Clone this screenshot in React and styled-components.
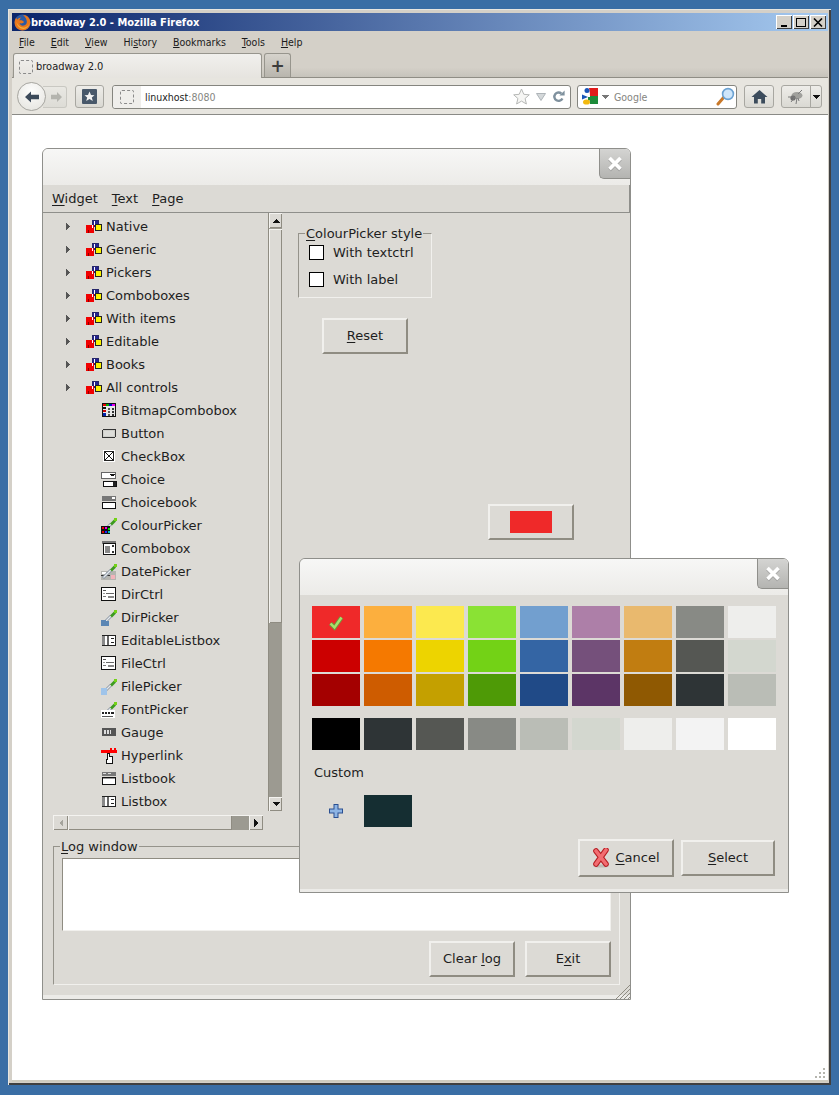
import React from "react";
import styled, { createGlobalStyle } from "styled-components";

const GlobalStyle = createGlobalStyle`
  html, body {
    margin: 0;
    width: 839px;
    height: 1095px;
    overflow: hidden;
    background: #3a6ea5;
  }
  * { box-sizing: border-box; }
  u { text-decoration-skip-ink: none; }
`;

const TOP_ITEMS = ["Native", "Generic", "Pickers", "Comboboxes", "With items", "Editable", "Books", "All controls"];

const CONTROLS = [
  ["BitmapCombobox", "bitmap"],
  ["Button", "button"],
  ["CheckBox", "check"],
  ["Choice", "choice"],
  ["Choicebook", "choicebook"],
  ["ColourPicker", "colour"],
  ["Combobox", "combo"],
  ["DatePicker", "date"],
  ["DirCtrl", "ctrl"],
  ["DirPicker", "dir"],
  ["EditableListbox", "list"],
  ["FileCtrl", "ctrl"],
  ["FilePicker", "file"],
  ["FontPicker", "font"],
  ["Gauge", "gauge"],
  ["Hyperlink", "link"],
  ["Listbook", "listbook"],
  ["Listbox", "list"],
];

const PALETTE = [
  "#ef2929", "#fcaf3e", "#fce94f", "#8ae234", "#729fcf", "#ad7fa8", "#e9b96e", "#888a85", "#eeeeec",
  "#cc0000", "#f57900", "#edd400", "#73d216", "#3465a4", "#75507b", "#c17d11", "#555753", "#d3d7cf",
  "#a40000", "#ce5c00", "#c4a000", "#4e9a06", "#204a87", "#5c3566", "#8f5902", "#2e3436", "#babdb6",
];

const GREYS = ["#000000", "#2e3436", "#555753", "#888a85", "#babdb6", "#d3d7cf", "#eeeeec", "#f3f3f3", "#ffffff"];

/* drawings */

const Pixel = styled.svg`
  display: block;
  flex: none;
  shape-rendering: crispEdges;
`;

const Smooth = styled.svg`
  display: block;
  flex: none;
`;

const Dropper = () => (
  <g shapeRendering="auto">
    <path d="M2 14 L10 6" stroke="#8b97a3" strokeWidth="3" />
    <path d="M2.5 13.5 L10 6" stroke="#e4e8ec" strokeWidth="1.2" />
    <path d="M9 5.5 L13 1.5 L15 3.5 L11 7.5 Z" fill="#3d9a20" />
    <path d="M13 0 h3 v3 h-3 Z" fill="#73d216" />
  </g>
);

const ControlIcon = ({ kind }) => {
  const k = "#111";
  let art = null;
  if (kind === "bitmap") {
    art = (
      <g>
        <rect x="1.5" y="0.5" width="13" height="13" fill="#e8e8e8" stroke={k} />
        <rect x="2" y="1" width="3" height="2" fill="#e00" />
        <rect x="5" y="1" width="3" height="2" fill="#0a0" />
        <rect x="8" y="1" width="3" height="2" fill="#00c" />
        <rect x="11" y="1" width="3" height="2" fill="#e0e" />
        <rect x="2" y="4" width="3" height="2" fill="#111" />
        <rect x="2" y="7" width="3" height="2" fill="#c00" />
        <rect x="2" y="10" width="3" height="3" fill="#02a" />
        <rect x="7" y="5" width="2" height="2" fill="#555" />
        <rect x="11" y="5" width="2" height="2" fill="#333" />
        <rect x="7" y="8" width="2" height="2" fill="#555" />
        <rect x="11" y="8" width="2" height="2" fill="#333" />
        <rect x="7" y="11" width="2" height="2" fill="#555" />
        <rect x="11" y="11" width="2" height="2" fill="#333" />
      </g>
    );
  } else if (kind === "button") {
    art = (
      <g>
        <rect x="1.5" y="3.5" width="13" height="8" rx="1.5" fill="#cfcfca" stroke="#333" />
        <rect x="3" y="5" width="10" height="5" fill="#dcdcd8" />
      </g>
    );
  } else if (kind === "check") {
    art = (
      <g>
        <rect x="2" y="1" width="12" height="12" fill="#fff" />
        <path d="M4 3 L12 11 M12 3 L4 11" stroke="#111" shapeRendering="auto" />
        <rect x="3.5" y="2.5" width="9" height="9" fill="none" stroke="#222" />
      </g>
    );
  } else if (kind === "choice") {
    art = (
      <g>
        <rect x="0.5" y="0.5" width="14" height="6" fill="#fff" stroke="#666" />
        <path d="M9 2 h5 v1 h-1 v1 h-3 v-1 h-1 Z" fill="#111" />
        <rect x="2.5" y="9.5" width="13" height="5" fill="#fff" stroke="#111" />
        <rect x="12" y="10" width="3" height="4" fill="#222" />
      </g>
    );
  } else if (kind === "choicebook") {
    art = (
      <g>
        <rect x="1" y="1" width="14" height="5" fill="#777" />
        <rect x="11" y="2" width="3" height="2" fill="#fff" />
        <rect x="1.5" y="7.5" width="13" height="6" fill="#fff" stroke="#111" />
      </g>
    );
  } else if (kind === "colour") {
    art = (
      <g>
        <Dropper />
        <rect x="0" y="8" width="9" height="8" fill="#111" />
        <rect x="1" y="9" width="2" height="2" fill="#e00" />
        <rect x="4" y="9" width="2" height="2" fill="#e0e" />
        <rect x="7" y="10" width="2" height="2" fill="#0d0" />
        <rect x="1" y="13" width="2" height="2" fill="#d00" />
        <rect x="4" y="13" width="2" height="2" fill="#22f" />
        <rect x="7" y="13" width="2" height="2" fill="#0bb" />
      </g>
    );
  } else if (kind === "combo") {
    art = (
      <g>
        <rect x="1" y="0" width="14" height="3" fill="#777" />
        <rect x="2.5" y="2.5" width="12" height="11" fill="#fff" stroke="#111" />
        <rect x="4" y="5" width="5" height="7" fill="#888" />
        <rect x="11" y="4" width="2" height="2" fill="#333" />
        <rect x="11" y="10" width="2" height="2" fill="#333" />
      </g>
    );
  } else if (kind === "date") {
    art = (
      <g>
        <rect x="0" y="7" width="15" height="9" fill="#b5b5b0" />
        <rect x="1" y="8" width="4" height="2" fill="#fff" />
        <rect x="10" y="11" width="4" height="4" fill="#f3b3bb" />
        <rect x="0" y="11" width="9" height="1" fill="#333" />
        <Dropper />
      </g>
    );
  } else if (kind === "ctrl") {
    art = (
      <g>
        <rect x="0.5" y="0.5" width="14" height="13" fill="#fff" stroke="#111" />
        <rect x="2" y="3" width="3" height="1" fill="#555" />
        <rect x="5" y="6" width="8" height="1" fill="#666" />
        <rect x="2" y="6" width="2" height="1" fill="#999" />
        <rect x="7" y="9" width="6" height="2" fill="#888" />
        <rect x="2" y="9" width="3" height="1" fill="#777" />
      </g>
    );
  } else if (kind === "dir") {
    art = (
      <g>
        <Dropper />
        <path d="M0 10 h4 l1 1 h3 v5 h-8 Z" fill="#5b86b4" />
      </g>
    );
  } else if (kind === "file") {
    art = (
      <g>
        <Dropper />
        <rect x="0" y="9" width="6" height="7" fill="#9fc4ea" />
      </g>
    );
  } else if (kind === "font") {
    art = (
      <g>
        <Dropper />
        <rect x="0" y="8" width="14" height="8" fill="#fff" />
        <rect x="1" y="10" width="2" height="2" fill="#222" />
        <rect x="4" y="10" width="2" height="2" fill="#222" />
        <rect x="7" y="10" width="2" height="2" fill="#222" />
        <rect x="10" y="10" width="3" height="2" fill="#222" />
        <rect x="1" y="14" width="11" height="1" fill="#555" />
      </g>
    );
  } else if (kind === "list") {
    art = (
      <g>
        <rect x="1.5" y="2.5" width="13" height="10" fill="#fff" stroke="#222" />
        <rect x="1" y="3" width="3" height="9" fill="#888" />
        <rect x="6" y="3" width="2" height="9" fill="#666" />
        <rect x="10" y="5" width="3" height="1" fill="#222" />
        <rect x="10" y="9" width="3" height="1" fill="#222" />
      </g>
    );
  } else if (kind === "gauge") {
    art = (
      <g>
        <rect x="1" y="3" width="14" height="8" fill="#555" />
        <rect x="3" y="5" width="2" height="4" fill="#ddd" />
        <rect x="6" y="5" width="2" height="4" fill="#ddd" />
        <rect x="9" y="5" width="1" height="4" fill="#ddd" />
      </g>
    );
  } else if (kind === "link") {
    art = (
      <g>
        <rect x="0" y="2" width="16" height="3" fill="#f00" />
        <rect x="9" y="0" width="2" height="2" fill="#f00" />
        <rect x="13" y="0" width="2" height="2" fill="#f00" />
        <path d="M6 5 h2 v3 h3 v7 h-6 v-4 h1 Z" fill="#fff" stroke="#111" />
      </g>
    );
  } else if (kind === "listbook") {
    art = (
      <g>
        <rect x="1" y="1" width="14" height="4" fill="#777" />
        <rect x="2" y="2" width="3" height="1" fill="#ddd" />
        <rect x="7" y="2" width="3" height="1" fill="#ddd" />
        <rect x="1.5" y="6.5" width="13" height="7" fill="#fff" stroke="#111" />
        <rect x="2" y="7" width="12" height="1" fill="#999" />
      </g>
    );
  }
  return (
    <Pixel width="16" height="16" viewBox="0 0 16 16">
      {art}
    </Pixel>
  );
};

const BookIcon = () => (
  <Pixel width="16" height="16" viewBox="0 0 16 16">
    <rect x="6.5" y="1.5" width="6" height="6" fill="#24248f" stroke="#26266a" />
    <rect x="8" y="2" width="1" height="4" fill="#fff" />
    <rect x="0" y="6" width="8" height="8" fill="#f00000" />
    <rect x="6" y="6" width="1" height="3" fill="#fff" />
    <rect x="2" y="11" width="1" height="3" fill="#8a0000" />
    <rect x="9.5" y="5.5" width="6" height="6" fill="#fbf300" stroke="#222" />
  </Pixel>
);

const Expander = () => (
  <Pixel width="5" height="7" viewBox="0 0 5 7">
    <path d="M0 0 L4 3.5 L0 7 Z" fill="#555" />
  </Pixel>
);

const CloseGlyph = () => (
  <Smooth width="18" height="18" viewBox="0 0 18 18">
    <path d="M3.5 4 L14.5 15 M14.5 4 L3.5 15" stroke="#8d8d8d" strokeWidth="4" opacity="0.5" />
    <path d="M3.5 3 L14.5 14 M14.5 3 L3.5 14" stroke="#fff" strokeWidth="3.6" />
  </Smooth>
);

const Firefox = () => (
  <Smooth width="17" height="17" viewBox="0 0 17 17">
    <circle cx="8.5" cy="8.5" r="8" fill="#2a5aa6" />
    <path d="M9 1 C13 1 16.6 4.5 16.4 9 C16 13.5 12.5 16.4 8.5 16.4 C4 16.4 .6 13 .6 8.5 C.6 6.5 1.3 5 2.4 3.6 C2.4 5 3 5.5 3.5 5.5 C4.5 4 6 3.8 7.5 3.6 C6 4.5 5.4 5.5 5.5 6.5 C7 6 9 6.5 10 8 C9 9.5 7 9.8 5.5 9 C6 11 8 12 10 11.5 C12.5 10.8 13.5 8.5 12.5 6 C12 4 10.5 2 9 1 Z" fill="#e8761c" />
    <path d="M2.5 8 C3 12 6 15 9.5 15 C12.5 14.8 15 12 15.4 9 C14.5 12 12 14 9 13.6 C6 13.2 3.5 11 2.5 8 Z" fill="#f4b03a" />
  </Smooth>
);

const BackArrow = () => (
  <Smooth width="16" height="14" viewBox="0 0 16 14">
    <path d="M1 7 L7 1.5 V4.8 H15 V9.2 H7 V12.5 Z" fill="#3c4a5a" />
  </Smooth>
);

const ForwardArrow = () => (
  <Smooth width="13" height="12" viewBox="0 0 13 12">
    <path d="M12 6 L7 1 V3.8 H1 V8.2 H7 V11 Z" fill="#b4b4ae" />
  </Smooth>
);

const BookmarksGlyph = () => (
  <Smooth width="17" height="17" viewBox="0 0 17 17">
    <rect x="1" y="1" width="15" height="15" rx="1" fill="#48586a" />
    <path d="M8.5 3.5 L10 7 L13.5 7.2 L10.8 9.5 L11.8 13 L8.5 11 L5.2 13 L6.2 9.5 L3.5 7.2 L7 7 Z" fill="#f3f3f3" />
  </Smooth>
);

const StarGlyph = () => (
  <Smooth width="17" height="17" viewBox="0 0 17 17">
    <path d="M8.5 1 L10.8 6.3 L16.3 6.8 L12.1 10.5 L13.4 16 L8.5 13.1 L3.6 16 L4.9 10.5 L.7 6.8 L6.2 6.3 Z" fill="#f6f6f4" stroke="#b6b8b6" />
  </Smooth>
);

const DropTriangle = () => (
  <Smooth width="10" height="8" viewBox="0 0 10 8">
    <path d="M0.5 0.5 H9.5 L5 7.5 Z" fill="#d4d8da" stroke="#aeb4b8" />
  </Smooth>
);

const Reload = () => (
  <Smooth width="13" height="13" viewBox="0 0 13 13">
    <path d="M10.4 8.4 A4.2 4.2 0 1 1 9.4 3.6" fill="none" stroke="#7f919e" strokeWidth="2.4" />
    <path d="M7.4 5.6 L12.6 5.6 L12.6 0.6 Z" fill="#7f919e" />
  </Smooth>
);

const GoogleGlyph = () => (
  <Smooth width="17" height="17" viewBox="0 0 17 17">
    <path d="M7 0 H16 V8 H8 C8 5 7.5 2 7 0 Z" fill="#e01b1b" />
    <circle cx="5" cy="2.5" r="2.5" fill="#1a56b8" />
    <path d="M0 6.5 L6 9 L0 11.5 Z" fill="#1a56b8" />
    <path d="M8 8 H16 V16 H8 V12.5 H6 V9 H8 Z" fill="#1d8b3a" />
    <ellipse cx="4.5" cy="14" rx="3.5" ry="2.6" fill="#f2b90f" />
  </Smooth>
);

const SmallDown = ({ color }) => (
  <Pixel width="7" height="4" viewBox="0 0 7 4">
    <path d="M0 0 H7 L3.5 4 Z" fill={color} />
  </Pixel>
);

const Magnifier = () => (
  <Smooth width="19" height="19" viewBox="0 0 19 19">
    <path d="M2 17 L8 10" stroke="#c9792a" strokeWidth="3" strokeLinecap="round" />
    <circle cx="12" cy="7" r="5.4" fill="#cfe6fa" stroke="#6ba2d2" strokeWidth="1.6" />
  </Smooth>
);

const HomeGlyph = () => (
  <Smooth width="17" height="15" viewBox="0 0 17 15">
    <path d="M8.5 1 L16.5 8 H14 V14.5 H10.2 V10 H6.8 V14.5 H3 V8 H.5 Z" fill="#3c4c5c" />
  </Smooth>
);

const BugGlyph = () => (
  <Smooth width="18" height="16" viewBox="0 0 18 16">
    <ellipse cx="10" cy="6.5" rx="5.5" ry="3.5" fill="#a0a09c" />
    <circle cx="6" cy="9" r="2.6" fill="#6e6e6e" />
    <path d="M1 8 L7 8 M4 13 L8 8 M9 15 L10 9 M12 12 L11 9 M15 1 L11 5" stroke="#7b7b7b" strokeWidth="1" />
  </Smooth>
);

const ResizeDots = () => (
  <Pixel width="11" height="11" viewBox="0 0 11 11">
    {[[8, 0], [8, 4], [4, 4], [8, 8], [4, 8], [0, 8]].map(([x, y]) => (
      <rect key={`${x}-${y}`} x={x} y={y} width="2" height="2" fill="#b5b5ae" />
    ))}
  </Pixel>
);

const ResizeHatch = () => (
  <Smooth width="15" height="15" viewBox="0 0 15 15">
    <path d="M1 15 L15 1 M5 15 L15 5 M9 15 L15 9 M13 15 L15 13" stroke="#8f8c82" strokeWidth="1" />
  </Smooth>
);

const Tick = () => (
  <Smooth width="18" height="18" viewBox="0 0 18 18">
    <path d="M3.5 10.5 L7.5 14.5 L14.5 4.5" fill="none" stroke="#6d9a3c" strokeWidth="4.2" />
    <path d="M3.5 10.5 L7.5 14.5 L14.5 4.5" fill="none" stroke="#a8e06c" strokeWidth="2.4" />
  </Smooth>
);

const PlusGlyph = () => (
  <Smooth width="16" height="16" viewBox="0 0 16 16">
    <path d="M8 1 V15 M1 8 H15" stroke="#2a4f91" strokeWidth="5" />
    <path d="M8 2 V14 M2 8 H14" stroke="#8db4e4" strokeWidth="3" />
  </Smooth>
);

const CancelGlyph = () => (
  <Smooth width="18" height="20" viewBox="0 0 18 20">
    <ellipse cx="9" cy="18" rx="8" ry="1.6" fill="#bdbcb6" />
    <path d="M4 3 L14 16 M14 2 L4 16" stroke="#b51c22" strokeWidth="5.6" strokeLinecap="round" />
    <path d="M4 3 L14 16 M14 2 L4 16" stroke="#f26d71" strokeWidth="3.6" strokeLinecap="round" />
  </Smooth>
);

const ArrowUp = () => (
  <Pixel width="8" height="4" viewBox="0 0 8 4">
    <path d="M4 0 L8 4 H0 Z" fill="#111" />
  </Pixel>
);

const ArrowDown = () => (
  <Pixel width="8" height="4" viewBox="0 0 8 4">
    <path d="M0 0 H8 L4 4 Z" fill="#111" />
  </Pixel>
);

const ArrowSide = ({ dim, left }) => (
  <Pixel width="4" height="8" viewBox="0 0 4 8">
    <path d={left ? "M4 0 V8 L0 4 Z" : "M0 0 V8 L4 4 Z"} fill={dim ? "#a5a49d" : "#111"} />
  </Pixel>
);

/* browser chrome */

const Desktop = styled.div`
  width: 839px;
  height: 1095px;
  padding: 9px 0 0 8px;
`;

const Browser = styled.div`
  width: 823px;
  height: 1076px;
  padding: 4px 3px 0 4px;
  background: #d4d0c8;
  display: flex;
  flex-direction: column;
  box-shadow: inset 1px 1px 0 #e8e6e0, inset -2px -2px 0 #404040;
`;

const TitleBar = styled.div`
  height: 18px;
  flex: none;
  display: flex;
  align-items: center;
  padding: 0 2px 0 2px;
  background: linear-gradient(90deg, #0a246a 0%, #a6caf0 100%);
  color: #fff;
  font: bold 11px "DejaVu Sans", sans-serif;
  font-stretch: condensed;
  gap: 0;
`;

const TitleText = styled.span`
  flex: 1;
  white-space: nowrap;
`;

const CaptionButtons = styled.div`
  display: flex;
  gap: 1px;
`;

const CaptionButton = styled.div`
  width: 16px;
  height: 14px;
  background: #d4d0c8;
  box-shadow: inset 1px 1px 0 #fff, inset -1px -1px 0 #404040;
  display: flex;
  align-items: center;
  justify-content: center;
  color: #000;
`;

const MenuBar = styled.div`
  height: 22px;
  flex: none;
  display: flex;
  align-items: center;
  padding: 0 0 0 7px;
  gap: 16px;
  background: #d4d0c8;
  font: 10.5px "DejaVu Sans", sans-serif;
  font-stretch: condensed;
  color: #1b1b1b;
`;

const TabStrip = styled.div`
  height: 25px;
  flex: none;
  display: flex;
  padding-left: 1px;
  gap: 2px;
  background: linear-gradient(#d4d0c8 60%, #c6c3bb);
  border-bottom: 1px solid #8f8d85;
`;

const Tab = styled.div`
  width: 249px;
  height: 25px;
  display: flex;
  align-items: center;
  gap: 3px;
  padding: 1px 0 0 5px;
  border: 1px solid #97958d;
  border-bottom: none;
  border-radius: 3px 3px 0 0;
  background: linear-gradient(#f1f0ed, #e6e4df);
  font: 11px "DejaVu Sans", sans-serif;
  font-stretch: condensed;
  color: #1b1b1b;
`;

const NewTab = styled.div`
  width: 27px;
  height: 24px;
  display: flex;
  align-items: center;
  justify-content: center;
  border: 1px solid #97958d;
  border-bottom: none;
  border-radius: 3px 3px 0 0;
  background: linear-gradient(#d6d3cc, #b8b5ad);
  color: #3c3c3c;
  font: bold 17px "DejaVu Sans", sans-serif;
`;

const FaviconBox = styled.div`
  width: 14px;
  height: 14px;
  flex: none;
  border: 1px dashed #8a8a8a;
  border-radius: 2px;
`;

const NavBar = styled.div`
  height: 37px;
  flex: none;
  display: flex;
  align-items: center;
  padding: 1px 5px 0 5px;
  background: #e7e5df;
  border-bottom: 1px solid #8a8a86;
`;

const BackButton = styled.div`
  width: 29px;
  height: 29px;
  flex: none;
  border-radius: 50%;
  display: flex;
  align-items: center;
  justify-content: center;
  background: radial-gradient(circle at 50% 30%, #fdfdfc, #e3e2dd);
  border: 1px solid #a6a5a0;
  position: relative;
  z-index: 1;
`;

const ForwardButton = styled.div`
  width: 24px;
  height: 22px;
  margin-left: -3px;
  padding-left: 7px;
  display: flex;
  align-items: center;
  border: 1px solid #c9c8c2;
  border-left: none;
  border-radius: 0 3px 3px 0;
  background: linear-gradient(#e9e8e3, #dddcd6);
`;

const ToolButton = styled.div`
  width: ${(p) => p.$width}px;
  height: 23px;
  margin-left: ${(p) => p.$gap}px;
  flex: none;
  display: flex;
  align-items: center;
  justify-content: center;
  border: 1px solid #a8a7a1;
  border-radius: ${(p) => p.$radius || "3px"};
  background: linear-gradient(#eeede9, #dad9d3);
`;

const UrlBar = styled.div`
  width: 459px;
  height: 24px;
  margin-left: 8px;
  flex: none;
  display: flex;
  align-items: center;
  background: #fff;
  border: 1px solid #85857f;
  border-radius: 3px;
  padding-right: 5px;
  font: 10.5px "DejaVu Sans", sans-serif;
  font-stretch: condensed;
`;

const Identity = styled.div`
  width: 28px;
  height: 22px;
  flex: none;
  display: flex;
  align-items: center;
  justify-content: center;
  background: #efeeeb;
  border-radius: 3px 0 0 3px;
`;

const UrlText = styled.div`
  flex: 1;
  padding-left: 4px;
  color: #1b1b1b;
  span { color: #85857f; }
`;

const UrlIcons = styled.div`
  display: flex;
  align-items: center;
  gap: 6px;
`;

const SearchBar = styled.div`
  width: 160px;
  height: 24px;
  margin-left: 6px;
  flex: none;
  display: flex;
  align-items: center;
  gap: 3px;
  padding: 0 1px 0 4px;
  background: #fff;
  border: 1px solid #85857f;
  border-radius: 3px;
  font: 10.5px "DejaVu Sans", sans-serif;
  font-stretch: condensed;
  color: #85857f;
`;

const SearchLabel = styled.span`
  flex: 1;
  padding-left: 2px;
`;

const BrowserPage = styled.div`
  flex: 1;
  position: relative;
  background: #fff;
  border-bottom: 2px solid #cfccbf;
  margin-bottom: 3px;
`;

const PageGrip = styled.div`
  position: absolute;
  right: 2px;
  bottom: 1px;
`;

/* broadway windows */

const Win = styled.div`
  position: absolute;
  left: ${(p) => p.$left}px;
  top: ${(p) => p.$top}px;
  width: ${(p) => p.$width}px;
  height: ${(p) => p.$height}px;
  display: flex;
  flex-direction: column;
  background: #dcdad5;
  border: 1px solid #8f8f8b;
  border-radius: 6px 6px 0 0;
  font: 13px "DejaVu Sans", sans-serif;
  color: #1e1e1e;
  overflow: hidden;
  u { text-underline-offset: 2px; }
`;

const WinHeader = styled.div`
  height: ${(p) => p.$height}px;
  flex: none;
  display: flex;
  justify-content: flex-end;
  background: linear-gradient(#f7f7f6, #ecebe8);
`;

const WinClose = styled.div`
  width: 31px;
  height: 30px;
  display: flex;
  align-items: center;
  justify-content: center;
  background: linear-gradient(#d4d4d2, #b4b4b1);
  border-left: 1px solid #8f8f8b;
  border-bottom: 1px solid #8f8f8b;
  border-radius: 0 0 0 5px;
`;

const WinMenu = styled.div`
  height: 28px;
  flex: none;
  display: flex;
  align-items: center;
  gap: 14px;
  padding-left: 9px;
  border-bottom: 1px solid #8f8f8b;
  border-right: 1px solid #8f8f8b;
`;

const Workspace = styled.div`
  height: 617px;
  flex: none;
  display: flex;
`;

const LeftColumn = styled.div`
  width: 239px;
  flex: none;
`;

const TreeArea = styled.div`
  display: flex;
  height: 598px;
`;

const TreeList = styled.div`
  width: 225px;
  flex: none;
  padding-top: 2px;
  overflow: hidden;
`;

const TreeRow = styled.div`
  height: 23px;
  display: flex;
  align-items: center;
  gap: 4px;
  padding-left: ${(p) => p.$indent}px;
  white-space: nowrap;
`;

const ExpanderSlot = styled.div`
  width: 16px;
  display: flex;
`;

const VScroll = styled.div`
  width: 14px;
  flex: none;
  display: flex;
  flex-direction: column;
  background: #9c9a91;
  border-left: 1px solid #8f8c82;
`;

const ScrollButton = styled.div`
  flex: none;
  display: flex;
  align-items: center;
  justify-content: center;
  width: ${(p) => p.$width || "100%"};
  height: ${(p) => p.$height || "100%"};
  background: #dcdad5;
  box-shadow: inset 1px 1px 0 #f4f3f0, inset -1px -1px 0 #8f8c82;
`;

const VThumb = styled.div`
  height: 394px;
  flex: none;
  margin-top: 1px;
  background: #dcdad5;
  box-shadow: inset 1px 1px 0 #f4f3f0, inset -1px -1px 0 #8f8c82;
`;

const Trough = styled.div`
  flex: 1;
`;

const HScroll = styled.div`
  width: 210px;
  height: 15px;
  margin: 4px 0 0 10px;
  display: flex;
  background: #9c9a91;
  box-shadow: inset 0 1px 0 #f4f3f0;
`;

const HThumb = styled.div`
  width: 164px;
  flex: none;
  background: #dcdad5;
  box-shadow: inset 1px 1px 0 #f4f3f0, inset -1px -1px 0 #8f8c82;
`;

const RightPanel = styled.div`
  flex: 1;
  padding: 13px 0 0 16px;
  display: flex;
  flex-direction: column;
`;

const Group = styled.fieldset`
  margin: 0;
  min-width: 0;
  border-style: solid;
  border-width: 1px;
  border-color: #95938b #f1f0ed #f1f0ed #95938b;
`;

const StyleGroup = styled(Group)`
  width: 134px;
  height: 72px;
  flex: none;
  padding: 4px 0 0 10px;
`;

const GroupLabel = styled.legend`
  padding: 0 1px;
  margin-left: ${(p) => p.$offset}px;
  line-height: 15px;
  white-space: nowrap;
`;

const CheckRow = styled.label`
  height: 15px;
  display: flex;
  align-items: center;
  gap: 9px;
  margin-bottom: 12px;
  white-space: nowrap;
`;

const CheckBox = styled.div`
  width: 15px;
  height: 15px;
  flex: none;
  background: #fff;
  border: 1px solid #000;
`;

const RaisedButton = styled.div`
  width: ${(p) => p.$width || 86}px;
  height: ${(p) => p.$height || 36}px;
  flex: none;
  display: flex;
  align-items: center;
  justify-content: center;
  gap: ${(p) => p.$gap || 0}px;
  padding-bottom: 1px;
  background: #dcdad5;
  border-style: solid;
  border-width: 2px;
  border-color: #f1f0ed #8f8c82 #8f8c82 #f1f0ed;
`;

const ResetButton = styled(RaisedButton)`
  margin: 20px 0 0 24px;
`;

const ColourButton = styled(RaisedButton)`
  margin: 150px 0 0 190px;
`;

const ColourChip = styled.div`
  width: 42px;
  height: 22px;
  background: #ef2929;
`;

const LogGroup = styled(Group)`
  width: 567px;
  height: 146px;
  flex: none;
  margin: 9px 0 0 10px;
  padding: 4px 8px 0 8px;
  display: flex;
  flex-direction: column;
`;

const LogBox = styled.div`
  width: 549px;
  height: 73px;
  flex: none;
  background: #fff;
  border-style: solid;
  border-width: 1px;
  border-color: #8f8c82 #f1f0ed #f1f0ed #8f8c82;
`;

const LogButtons = styled.div`
  width: 549px;
  display: flex;
  justify-content: flex-end;
  gap: 10px;
  margin-top: 10px;
`;

const BottomStrip = styled.div`
  height: ${(p) => p.$height}px;
  flex: none;
  margin-top: auto;
  background: #ecebe8;
`;

const MainGrip = styled.div`
  position: absolute;
  right: 0;
  bottom: 0;
`;

const DialogBody = styled.div`
  flex: 1;
  padding: 11px 12px 0 12px;
  display: flex;
  flex-direction: column;
`;

const SwatchGrid = styled.div`
  display: grid;
  grid-template-columns: repeat(9, 48px);
  grid-auto-rows: 32px;
  gap: 2px 4px;
  margin-bottom: ${(p) => p.$after || 0}px;
`;

const Swatch = styled.div`
  display: flex;
  align-items: center;
  justify-content: center;
  background: ${(p) => p.$color};
`;

const CustomLabel = styled.div`
  margin: 15px 0 0 2px;
  line-height: 16px;
`;

const CustomRow = styled.div`
  display: grid;
  grid-template-columns: repeat(2, 48px);
  grid-auto-rows: 32px;
  gap: 4px;
  margin-top: 14px;
`;

const DialogButtons = styled.div`
  display: flex;
  justify-content: flex-end;
  align-items: center;
  gap: 7px;
  margin: 12px 1px 0 0;
`;

const App = () => (
  <Desktop>
    <GlobalStyle />
    <Browser>
      <TitleBar>
        <Firefox />
        <TitleText>broadway 2.0 - Mozilla Firefox</TitleText>
        <CaptionButtons>
          <CaptionButton>
            <Pixel width="8" height="10" viewBox="0 0 8 10">
              <rect x="1" y="8" width="6" height="2" fill="#000" />
            </Pixel>
          </CaptionButton>
          <CaptionButton>
            <Pixel width="10" height="10" viewBox="0 0 10 10">
              <path d="M0.5 1.5 H9.5 V9.5 H0.5 Z M0 1 H10" fill="none" stroke="#000" />
            </Pixel>
          </CaptionButton>
          <CaptionButton>
            <Smooth width="10" height="9" viewBox="0 0 10 9">
              <path d="M1 .5 L9 8.5 M9 .5 L1 8.5" stroke="#000" strokeWidth="1.6" />
            </Smooth>
          </CaptionButton>
        </CaptionButtons>
      </TitleBar>
      <MenuBar>
        <span><u>F</u>ile</span>
        <span><u>E</u>dit</span>
        <span><u>V</u>iew</span>
        <span>Hi<u>s</u>tory</span>
        <span><u>B</u>ookmarks</span>
        <span><u>T</u>ools</span>
        <span><u>H</u>elp</span>
      </MenuBar>
      <TabStrip>
        <Tab>
          <FaviconBox />
          broadway 2.0
        </Tab>
        <NewTab>+</NewTab>
      </TabStrip>
      <NavBar>
        <BackButton>
          <BackArrow />
        </BackButton>
        <ForwardButton>
          <ForwardArrow />
        </ForwardButton>
        <ToolButton $width={29} $gap={8}>
          <BookmarksGlyph />
        </ToolButton>
        <UrlBar>
          <Identity>
            <FaviconBox />
          </Identity>
          <UrlText>
            linuxhost<span>:8080</span>
          </UrlText>
          <UrlIcons>
            <StarGlyph />
            <DropTriangle />
            <Reload />
          </UrlIcons>
        </UrlBar>
        <SearchBar>
          <GoogleGlyph />
          <SmallDown color="#777" />
          <SearchLabel>Google</SearchLabel>
          <Magnifier />
        </SearchBar>
        <ToolButton $width={30} $gap={7}>
          <HomeGlyph />
        </ToolButton>
        <ToolButton $width={30} $gap={7} $radius="3px 0 0 3px">
          <BugGlyph />
        </ToolButton>
        <ToolButton $width={12} $gap={-1} $radius="0 3px 3px 0">
          <SmallDown color="#111" />
        </ToolButton>
      </NavBar>
      <BrowserPage>
        <Win $left={30} $top={33} $width={589} $height={852}>
          <WinHeader $height={36}>
            <WinClose>
              <CloseGlyph />
            </WinClose>
          </WinHeader>
          <WinMenu>
            <span><u>W</u>idget</span>
            <span><u>T</u>ext</span>
            <span><u>P</u>age</span>
          </WinMenu>
          <Workspace>
            <LeftColumn>
              <TreeArea>
                <TreeList>
                  {TOP_ITEMS.map((label) => (
                    <TreeRow key={label} $indent={23}>
                      <ExpanderSlot>
                        <Expander />
                      </ExpanderSlot>
                      <BookIcon />
                      {label}
                    </TreeRow>
                  ))}
                  {CONTROLS.map(([label, kind]) => (
                    <TreeRow key={label} $indent={58}>
                      <ControlIcon kind={kind} />
                      {label}
                    </TreeRow>
                  ))}
                </TreeList>
                <VScroll>
                  <ScrollButton $height="15px">
                    <ArrowUp />
                  </ScrollButton>
                  <VThumb />
                  <Trough />
                  <ScrollButton $height="14px">
                    <ArrowDown />
                  </ScrollButton>
                </VScroll>
              </TreeArea>
              <HScroll>
                <ScrollButton $width="15px">
                  <ArrowSide left dim />
                </ScrollButton>
                <HThumb />
                <Trough />
                <ScrollButton $width="14px">
                  <ArrowSide />
                </ScrollButton>
              </HScroll>
            </LeftColumn>
            <RightPanel>
              <StyleGroup>
                <GroupLabel $offset={-4}>
                  <u>C</u>olourPicker style
                </GroupLabel>
                <CheckRow>
                  <CheckBox />
                  With textctrl
                </CheckRow>
                <CheckRow>
                  <CheckBox />
                  With label
                </CheckRow>
              </StyleGroup>
              <ResetButton>
                <span><u>R</u>eset</span>
              </ResetButton>
              <ColourButton>
                <ColourChip />
              </ColourButton>
            </RightPanel>
          </Workspace>
          <LogGroup>
            <GroupLabel $offset={-2}>
              <u>L</u>og window
            </GroupLabel>
            <LogBox />
            <LogButtons>
              <RaisedButton>
                <span>Clear <u>l</u>og</span>
              </RaisedButton>
              <RaisedButton>
                <span>E<u>x</u>it</span>
              </RaisedButton>
            </LogButtons>
          </LogGroup>
          <BottomStrip $height={4} />
          <MainGrip>
            <ResizeHatch />
          </MainGrip>
        </Win>
        <Win $left={287} $top={443} $width={490} $height={335}>
          <WinHeader $height={36}>
            <WinClose>
              <CloseGlyph />
            </WinClose>
          </WinHeader>
          <DialogBody>
            <SwatchGrid $after={12}>
              {PALETTE.map((color, i) => (
                <Swatch key={color + i} $color={color}>
                  {i === 0 && <Tick />}
                </Swatch>
              ))}
            </SwatchGrid>
            <SwatchGrid>
              {GREYS.map((color) => (
                <Swatch key={color} $color={color} />
              ))}
            </SwatchGrid>
            <CustomLabel>Custom</CustomLabel>
            <CustomRow>
              <Swatch $color="transparent">
                <PlusGlyph />
              </Swatch>
              <Swatch $color="#152e32" />
            </CustomRow>
            <DialogButtons>
              <RaisedButton $width={96} $height={38} $gap={5}>
                <CancelGlyph />
                <span><u>C</u>ancel</span>
              </RaisedButton>
              <RaisedButton $width={94} $height={36}>
                <span><u>S</u>elect</span>
              </RaisedButton>
            </DialogButtons>
          </DialogBody>
          <BottomStrip $height={3} />
        </Win>
        <PageGrip>
          <ResizeDots />
        </PageGrip>
      </BrowserPage>
    </Browser>
  </Desktop>
);

export default App;
